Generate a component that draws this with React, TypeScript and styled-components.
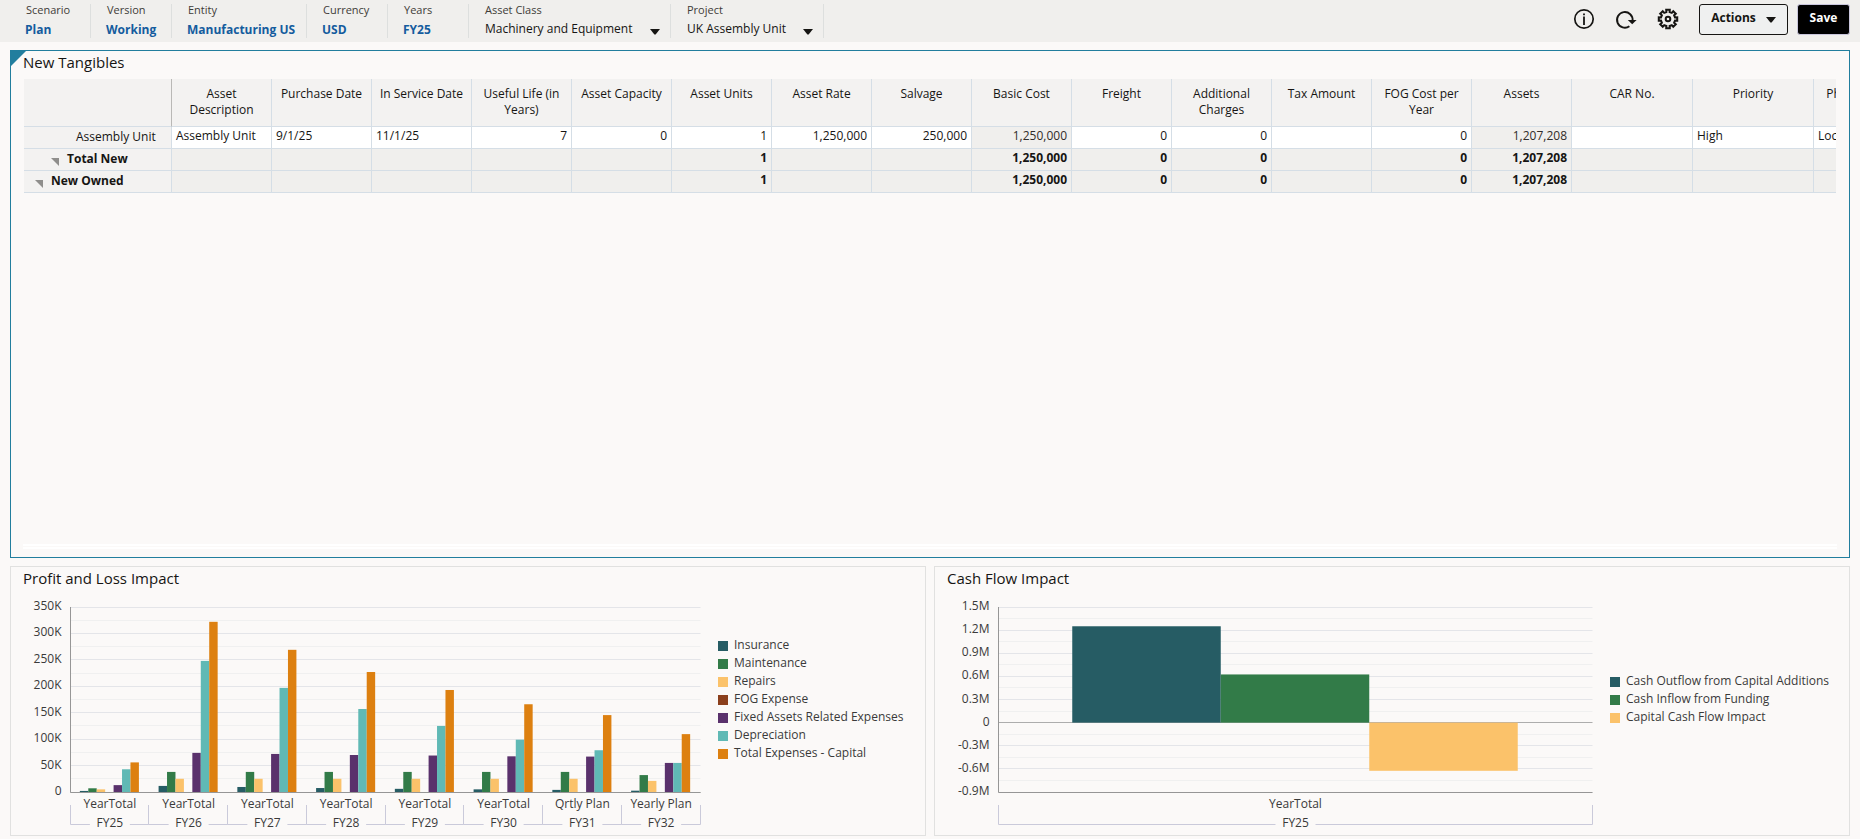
import React, { useLayoutEffect, useRef, useState } from 'react';
import styled, { createGlobalStyle } from 'styled-components';

const GlobalStyle = createGlobalStyle`
  *, *::before, *::after { box-sizing: border-box; }
  body {
    margin: 0;
    background: #fbf9f8;
    color: #161513;
    font: 12px/16px 'Open Sans', 'Noto Sans', sans-serif;
  }
  button, select { font: inherit; color: inherit; }
`;

/* ---------- page frame ---------- */

const Page = styled.div`
  display: flex;
  flex-direction: column;
  min-height: 100vh;
`;

const Main = styled.main`
  flex: 1;
  display: flex;
  flex-direction: column;
  gap: 8px;
  padding: 8px 10px 3px;
`;

const ChartRow = styled.div`
  display: grid;
  grid-template-columns: 1fr 1fr;
  gap: 8px;
`;

/* ---------- point-of-view bar ---------- */

const PovBar = styled.header`
  display: flex;
  justify-content: space-between;
  height: 42px;
  padding: 0 10px;
  background: #f0efed;
`;

const PovList = styled.div`
  display: flex;
  padding: 4px 0;
`;

const PovItem = styled.div<{ $width: number }>`
  display: flex;
  flex-direction: column;
  width: ${(p) => p.$width}px;
  padding: 0 10px 0 15px;
  border-right: 1px solid #dddfde;
`;

const PovLabel = styled.label`
  padding-left: 1px;
  font-size: 11px;
  line-height: 12px;
  color: #403c38;
`;

const PovLink = styled.a`
  padding-top: 5px;
  font-weight: 700;
  line-height: 18px;
  color: #145c9e;
  text-decoration: none;
  white-space: nowrap;
`;

const SelectBox = styled.div`
  display: grid;
  align-items: center;
  padding: 4px 0 0 1px;

  > * { grid-area: 1 / 1; }
  > svg { justify-self: end; margin-top: 5px; pointer-events: none; }
`;

const PovSelect = styled.select`
  appearance: none;
  width: 100%;
  height: 18px;
  padding: 0 16px 0 0;
  border: 0;
  background: transparent;
  line-height: 18px;
`;

const Tools = styled.div`
  display: flex;
  align-items: center;
  gap: 9px;
  padding-bottom: 4px;
`;

const IconGroup = styled.div`
  display: flex;
  gap: 18px;
  padding-right: 10px;
`;

const IconButton = styled.button`
  display: flex;
  width: 24px;
  height: 24px;
  padding: 0;
  border: 0;
  background: transparent;
`;

const CommandButton = styled.button<{ $primary?: boolean }>`
  display: flex;
  align-items: center;
  justify-content: center;
  gap: 10px;
  height: 31px;
  width: ${(p) => (p.$primary ? 53 : 89)}px;
  padding: 0 0 2px;
  border: 1px solid ${(p) => (p.$primary ? '#c9c6dc' : '#161513')};
  border-radius: 3px;
  background: ${(p) => (p.$primary ? '#000' : '#eff0f0')};
  color: ${(p) => (p.$primary ? '#fff' : '#161513')};
  font-weight: 700;

  > svg { margin-top: 4px; }
`;

function Caret() {
  return (
    <svg width="10" height="6" viewBox="0 0 10 6" aria-hidden="true">
      <path d="M0 0H10L5.6 5.6H4.4Z" fill="#161513" />
    </svg>
  );
}

function InfoIcon() {
  return (
    <svg width="24" height="24" viewBox="0 0 24 24" aria-hidden="true">
      <circle cx="12" cy="12" r="9.2" fill="none" stroke="#161513" strokeWidth="1.7" />
      <path d="M11.1 6.4h1.8v1.9h-1.8zM11.1 9.6h1.8V18h-1.8z" fill="#161513" />
    </svg>
  );
}

function RefreshIcon() {
  return (
    <svg width="24" height="24" viewBox="0 0 24 24" aria-hidden="true">
      <path d="M15.4 19.2A7.8 7.8 0 1 1 18.6 13.6" fill="none" stroke="#161513" strokeWidth="1.9" />
      <path d="M13.8 12.9H22.6L18.2 17.3Z" fill="#161513" />
    </svg>
  );
}

/* Outline of a gear with eight square teeth, centred in a 24px box. */
const gearPath = (() => {
  const points: string[] = [];
  for (let tooth = 0; tooth < 8; tooth++) {
    const at = tooth * 45;
    const corners: [number, number][] = [
      [-13, 7.2],
      [-11, 9.4],
      [11, 9.4],
      [13, 7.2],
    ];
    corners.forEach(([offset, radius]) => {
      const a = ((at + offset) * Math.PI) / 180;
      points.push(`${(12 + radius * Math.cos(a)).toFixed(2)} ${(12 + radius * Math.sin(a)).toFixed(2)}`);
    });
  }
  return `M${points.join('L')}Z`;
})();

function GearIcon() {
  return (
    <svg width="24" height="24" viewBox="0 0 24 24" aria-hidden="true">
      <path d={gearPath} fill="none" stroke="#161513" strokeWidth="2" />
      <circle cx="12" cy="12" r="2.3" fill="none" stroke="#161513" strokeWidth="2" />
    </svg>
  );
}

const pov = [
  { label: 'Scenario', value: 'Plan', width: 81 },
  { label: 'Version', value: 'Working', width: 81 },
  { label: 'Entity', value: 'Manufacturing US', width: 135 },
  { label: 'Currency', value: 'USD', width: 81 },
  { label: 'Years', value: 'FY25', width: 81 },
  { label: 'Asset Class', value: 'Machinery and Equipment', width: 202, choose: true },
  { label: 'Project', value: 'UK Assembly Unit', width: 153, choose: true },
];

function Header() {
  return (
    <PovBar>
      <PovList>
        {pov.map((item) => {
          const id = item.label.toLowerCase().replace(' ', '-');
          return (
            <PovItem key={id} $width={item.width}>
              <PovLabel as={item.choose ? 'label' : 'span'} htmlFor={item.choose ? id : undefined}>
                {item.label}
              </PovLabel>
              {item.choose ? (
                <SelectBox>
                  <PovSelect id={id} defaultValue={item.value}>
                    <option>{item.value}</option>
                  </PovSelect>
                  <Caret />
                </SelectBox>
              ) : (
                <PovLink href="#">{item.value}</PovLink>
              )}
            </PovItem>
          );
        })}
      </PovList>
      <Tools>
        <IconGroup>
          <IconButton aria-label="Information"><InfoIcon /></IconButton>
          <IconButton aria-label="Refresh"><RefreshIcon /></IconButton>
          <IconButton aria-label="Settings"><GearIcon /></IconButton>
        </IconGroup>
        <CommandButton>
          Actions
          <Caret />
        </CommandButton>
        <CommandButton $primary>Save</CommandButton>
      </Tools>
    </PovBar>
  );
}

/* ---------- panels ---------- */

const Panel = styled.section<{ $active?: boolean }>`
  position: relative;
  display: flex;
  flex-direction: column;
  flex: ${(p) => (p.$active ? 1 : 'initial')};
  min-width: 0;
  border: 1px solid ${(p) => (p.$active ? '#227e9e' : '#e1e1e0')};
  padding-left: 12px;
`;

const PanelTitle = styled.h2`
  margin: 0;
  padding: 1px 0;
  font-size: 15px;
  font-weight: 400;
  line-height: 20px;
  z-index: 1;
`;

const ActiveCorner = styled.span`
  position: absolute;
  top: -1px;
  left: -1px;
  width: 17px;
  height: 17px;
  background: #227e9e;
  clip-path: polygon(0 0, 100% 0, 0 100%);
`;

/* ---------- data grid ---------- */

const GridViewport = styled.div`
  flex: 1;
  margin: 6px 13px 0 1px;
  overflow: hidden;
`;

const Grid = styled.table`
  table-layout: fixed;
  width: 1911px;
  border-spacing: 0;
`;

const ColumnHead = styled.th`
  height: 48px;
  padding: 7px 6px;
  border-right: 1px solid #d5dee6;
  border-bottom: 1px solid #d5dee6;
  background: #f3f2f1;
  font-weight: 400;
  text-align: center;
  vertical-align: top;
`;

const CornerCell = styled.td`
  border-right: 1px solid #b9b8b6;
  border-bottom: 1px solid #d5dee6;
  background: #f3f2f1;
`;

const RowHead = styled.th<{ $indent: number; $total?: boolean }>`
  height: 22px;
  padding: 2px 0 3px ${(p) => p.$indent}px;
  border-right: 1px solid #d5dee6;
  border-bottom: 1px solid #d5dee6;
  background: #f3f2f1;
  font-weight: ${(p) => (p.$total ? 700 : 400)};
  text-align: left;
`;

const RowHeadContent = styled.span`
  display: flex;
  align-items: center;
  gap: 8px;

  > svg { margin-top: 5px; }
`;

const Cell = styled.td<{ $locked?: boolean; $bold?: boolean; $start?: boolean }>`
  height: 22px;
  padding: 1px 4px 4px;
  border-right: 1px solid #d5dee6;
  border-bottom: 1px solid #d5dee6;
  background: ${(p) => (p.$locked ? '#f0efed' : '#fff')};
  color: ${(p) => (p.$locked && !p.$bold ? '#302c29' : '#161513')};
  font-weight: ${(p) => (p.$bold ? 700 : 400)};
  text-align: ${(p) => (p.$start ? 'left' : 'right')};
  white-space: nowrap;
`;

const ScrollTrack = styled.div`
  height: 5px;
  margin: 0 12px 8px 0;
  border: solid #fff;
  border-width: 2px 0;
`;

type Column = {
  title: string;
  value?: string;
  total?: string;
  start?: boolean;
  locked?: boolean;
  width?: number;
};

const columns: Column[] = [
  { title: 'Asset Description', value: 'Assembly Unit', start: true },
  { title: 'Purchase Date', value: '9/1/25', start: true },
  { title: 'In Service Date', value: '11/1/25', start: true },
  { title: 'Useful Life (in Years)', value: '7' },
  { title: 'Asset Capacity', value: '0' },
  { title: 'Asset Units', value: '1', total: '1' },
  { title: 'Asset Rate', value: '1,250,000' },
  { title: 'Salvage', value: '250,000' },
  { title: 'Basic Cost', value: '1,250,000', total: '1,250,000', locked: true },
  { title: 'Freight', value: '0', total: '0' },
  { title: 'Additional Charges', value: '0', total: '0' },
  { title: 'Tax Amount' },
  { title: 'FOG Cost per Year', value: '0', total: '0' },
  { title: 'Assets', value: '1,207,208', total: '1,207,208', locked: true },
  { title: 'CAR No.', width: 121 },
  { title: 'Priority', value: 'High', start: true, width: 121 },
  { title: 'Physical Location', value: 'Location 1', start: true, width: 121 },
];

const totals = [
  { name: 'Total New', indent: 27 },
  { name: 'New Owned', indent: 11 },
];

function ExpandMark() {
  return (
    <svg width="8" height="8" viewBox="0 0 8 8" aria-hidden="true">
      <path d="M0 0H8V8Z" fill="#8f8e8c" />
    </svg>
  );
}

function AssetGrid() {
  return (
    <GridViewport>
      <Grid>
        <colgroup>
          <col width={148} />
          {columns.map((c) => (
            <col key={c.title} width={c.width ?? 100} />
          ))}
        </colgroup>
        <thead>
          <tr>
            <CornerCell />
            {columns.map((c) => (
              <ColumnHead key={c.title} scope="col">{c.title}</ColumnHead>
            ))}
          </tr>
        </thead>
        <tbody>
          <tr>
            <RowHead scope="row" $indent={52}>Assembly Unit</RowHead>
            {columns.map((c) => (
              <Cell key={c.title} $locked={c.locked} $start={c.start}>{c.value}</Cell>
            ))}
          </tr>
          {totals.map((t) => (
            <tr key={t.name}>
              <RowHead scope="row" $indent={t.indent} $total>
                <RowHeadContent>
                  <ExpandMark />
                  {t.name}
                </RowHeadContent>
              </RowHead>
              {columns.map((c) => (
                <Cell key={c.title} $locked $bold>{c.total}</Cell>
              ))}
            </tr>
          ))}
        </tbody>
      </Grid>
    </GridViewport>
  );
}

/* ---------- charts ---------- */

const ChartBody = styled.div`
  display: flex;
`;

const PlotArea = styled.div`
  flex: 1;
  min-width: 0;
  height: 246px;

  > svg { display: block; }
`;

const AxisText = styled.text`
  font-size: 12px;
  fill: #3a3a3a;
`;

const Legend = styled.ul<{ $width: number }>`
  display: flex;
  flex-direction: column;
  justify-content: center;
  flex: 0 0 ${(p) => p.$width}px;
  margin: 0;
  padding: 0 0 26px 16px;
  list-style: none;
`;

const LegendItem = styled.li`
  display: flex;
  align-items: center;
  gap: 6px;
  line-height: 18px;
  color: #3a3a3a;
  white-space: nowrap;
`;

const Swatch = styled.span<{ $color: string }>`
  width: 10px;
  height: 10px;
  margin-top: 2px;
  background: ${(p) => p.$color};
`;

type Series = { name: string; color: string; values: number[] };
type Group = { period: string; year: string };

type ChartProps = {
  title: string;
  groups: Group[];
  series: Series[];
  min: number;
  max: number;
  step: number;
  format: (v: number) => string;
  axisWidth: number;
  legendWidth: number;
};

const TOP = 18;
const BOTTOM = 203;

function BarChart(props: ChartProps) {
  const { title, groups, series, min, max, step, format, axisWidth, legendWidth } = props;
  const area = useRef<HTMLDivElement>(null);
  const [width, setWidth] = useState(680);

  useLayoutEffect(() => {
    const node = area.current!;
    const measure = () => setWidth(node.clientWidth);
    measure();
    const observer = new ResizeObserver(measure);
    observer.observe(node);
    return () => observer.disconnect();
  }, []);

  const left = axisWidth + 0.5;
  const right = width - 1.5;
  const y = (v: number) => TOP + ((max - v) / (max - min)) * (BOTTOM - TOP);
  const snap = (v: number) => Math.floor(v) + 0.5;
  const lines = Array.from({ length: Math.round((max - min) / step) * 2 + 1 }, (_, i) => min + (i * step) / 2);
  const groupWidth = (right - left) / groups.length;
  const barWidth = (groupWidth * 0.75) / series.length;

  return (
    <Panel>
      <PanelTitle>{title}</PanelTitle>
      <ChartBody>
        <PlotArea ref={area}>
          <svg width={width} height="246" role="img" aria-label={title}>
            {lines.map((v, i) => (
              <line
                key={i}
                x1={left}
                x2={right}
                y1={snap(y(v))}
                y2={snap(y(v))}
                stroke={Math.abs(v) < 0.001 ? '#adadad' : i % 2 ? '#f0f0f0' : '#e4e5e9'}
              />
            ))}
            {lines.filter((_, i) => i % 2 === 0).map((v) => (
              <AxisText key={v} x={left - 9} y={y(v) + 3} textAnchor="end">{format(v)}</AxisText>
            ))}
            {groups.map((_, g) =>
              series.map((s, i) => {
                const v = s.values[g];
                return (
                  <rect
                    key={s.name + g}
                    x={axisWidth + groupWidth * (g + 0.125) + barWidth * i}
                    y={y(Math.max(v, 0))}
                    width={barWidth}
                    height={y(Math.min(v, 0)) - y(Math.max(v, 0))}
                    fill={s.color}
                  />
                );
              }),
            )}
            <path d={`M${left} ${TOP}V${BOTTOM + 0.5}H${right}`} fill="none" stroke="#969696" />
            {groups.map((group, g) => {
              const start = snap(axisWidth + groupWidth * g);
              const end = snap(axisWidth + groupWidth * (g + 1));
              const middle = left + groupWidth * (g + 0.5);
              return (
                <g key={group.year}>
                  <path
                    d={`M${start} 216V235.500H${middle - 20}M${middle + 20} 235.500H${end}V216`}
                    fill="none"
                    stroke="#cacada"
                  />
                  <AxisText x={middle} y="219" textAnchor="middle">{group.period}</AxisText>
                  <AxisText x={middle} y="238" textAnchor="middle">{group.year}</AxisText>
                </g>
              );
            })}
          </svg>
        </PlotArea>
        <Legend $width={legendWidth}>
          {series.map((s) => (
            <LegendItem key={s.name}>
              <Swatch $color={s.color} />
              {s.name}
            </LegendItem>
          ))}
        </Legend>
      </ChartBody>
    </Panel>
  );
}

const profitGroups: Group[] = [
  { period: 'YearTotal', year: 'FY25' },
  { period: 'YearTotal', year: 'FY26' },
  { period: 'YearTotal', year: 'FY27' },
  { period: 'YearTotal', year: 'FY28' },
  { period: 'YearTotal', year: 'FY29' },
  { period: 'YearTotal', year: 'FY30' },
  { period: 'Qrtly Plan', year: 'FY31' },
  { period: 'Yearly Plan', year: 'FY32' },
];

const profitSeries: Series[] = [
  { name: 'Insurance', color: '#265c64', values: [2, 11.5, 9.5, 7.5, 6, 5, 4, 2.5] },
  { name: 'Maintenance', color: '#327b48', values: [7, 38, 38, 38, 38, 38, 38, 32] },
  { name: 'Repairs', color: '#fbc26a', values: [5, 25, 25, 25, 25, 25, 25, 21] },
  { name: 'FOG Expense', color: '#8b3f1c', values: [0, 0, 0, 0, 0, 0, 0, 0] },
  { name: 'Fixed Assets Related Expenses', color: '#5a316c', values: [13, 74, 72, 70, 69, 67.5, 67, 55] },
  { name: 'Depreciation', color: '#60b9b5', values: [43, 248, 197, 157, 125, 99, 79, 55] },
  { name: 'Total Expenses - Capital', color: '#dd8010', values: [56, 322, 269, 227, 193, 166, 145.5, 109.5] },
];

const cashSeries: Series[] = [
  { name: 'Cash Outflow from Capital Additions', color: '#265c64', values: [1.25] },
  { name: 'Cash Inflow from Funding', color: '#327b48', values: [0.625] },
  { name: 'Capital Cash Flow Impact', color: '#fbc26a', values: [-0.625] },
];

const thousands = (v: number) => (v === 0 ? '0' : `${v}K`);
const millions = (v: number) => (Math.abs(v) < 0.001 ? '0' : `${v.toFixed(1)}M`);

export default function App() {
  return (
    <Page>
      <GlobalStyle />
      <Header />
      <Main>
        <Panel $active>
          <ActiveCorner />
          <PanelTitle>New Tangibles</PanelTitle>
          <AssetGrid />
          <ScrollTrack />
        </Panel>
        <ChartRow>
          <BarChart
            title="Profit and Loss Impact"
            groups={profitGroups}
            series={profitSeries}
            min={0}
            max={350}
            step={50}
            format={thousands}
            axisWidth={47}
            legendWidth={223}
          />
          <BarChart
            title="Cash Flow Impact"
            groups={[{ period: 'YearTotal', year: 'FY25' }]}
            series={cashSeries}
            min={-0.9}
            max={1.5}
            step={0.3}
            format={millions}
            axisWidth={51}
            legendWidth={255}
          />
        </ChartRow>
      </Main>
    </Page>
  );
}
